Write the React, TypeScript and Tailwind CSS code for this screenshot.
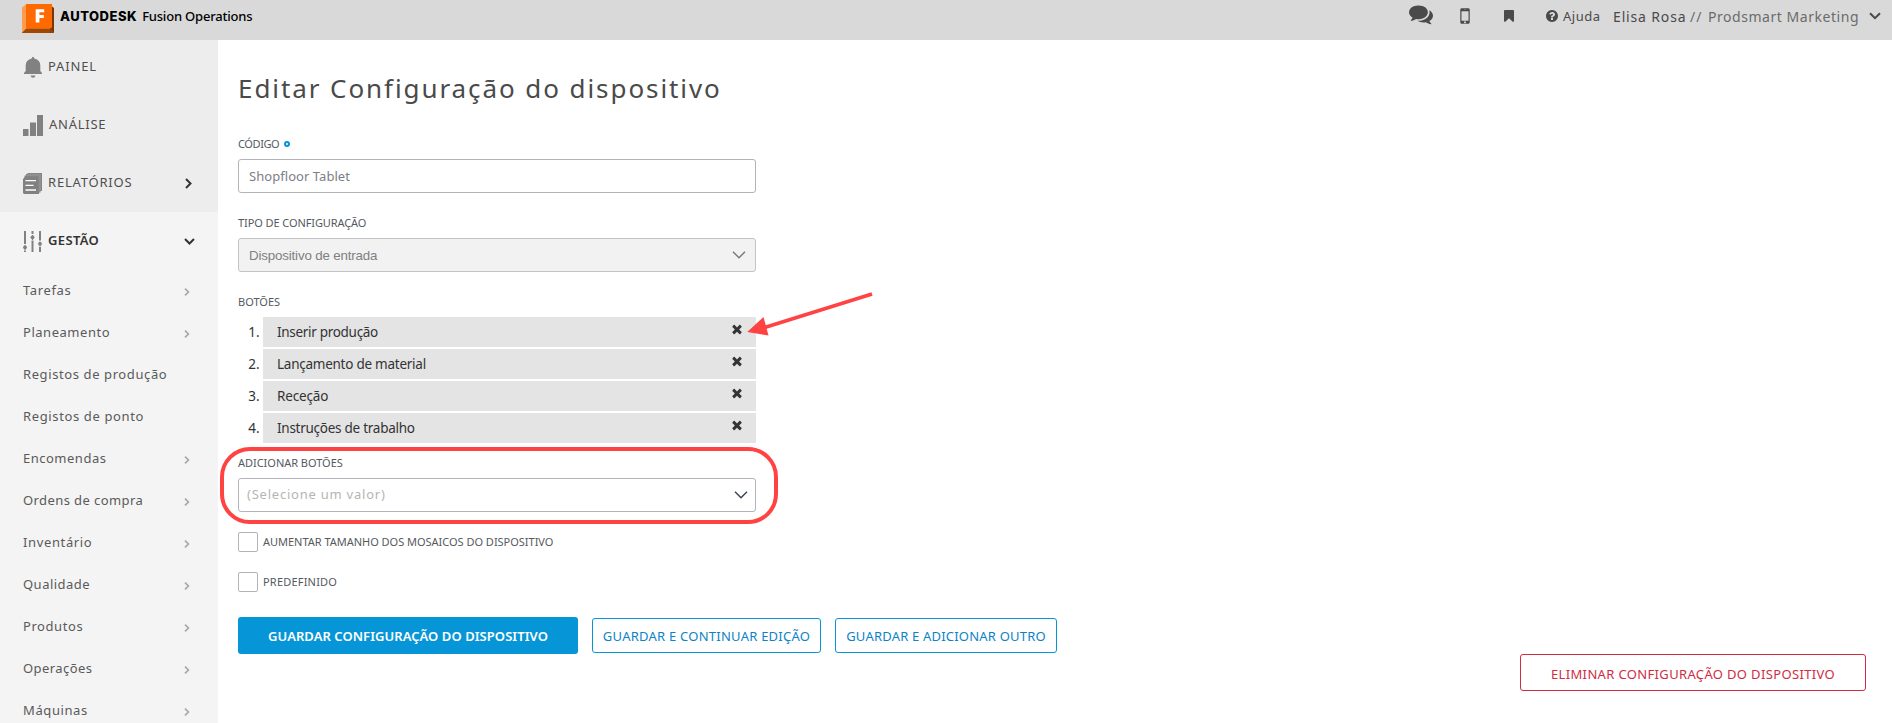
import React from "react";

function Glyph({ d, className, viewBox = "0 0 1792 1792" }: { d: string; className: string; viewBox?: string }) {
  return (
    <svg viewBox={viewBox} className={className} fill="currentColor" aria-hidden="true">
      <path d={d} />
    </svg>
  );
}

const COMMENTS =
  "M1408 768q0 139-94 257t-256.5 186.5-353.5 68.5q-86 0-176-16-124 88-278 128-36 9-86 16h-3q-11 0-20.5-8t-11.5-21q-1-3-1-6.5t.5-6.5 2-6l2.5-5t3.5-5.5 4-5 4.5-5 4-4.5q5-6 23-25t26-29.5 22.5-29 25-38.5 20.5-44q-124-72-195-177t-71-224q0-139 94-257t256.5-186.5 353.5-68.5 353.5 68.5 256.5 186.5 94 257zm384 256q0 120-71 224.5t-195 176.5q10 24 20.5 44t25 38.5 22.5 29 26 29.5 23 25q1 1 4 4.5t4.5 5 4 5 3.5 5.5l2.5 5t2 6 .5 6.5-1 6.5q-3 14-13 22t-22 7q-50-7-86-16-154-40-278-128-90 16-176 16-271 0-472-132 58 4 88 4 161 0 309-45t264-129q125-92 192-212t67-254q0-77-23-152 129 71 204 178t75 230z";
const MOBILE =
  "M976 1408q0-33-23.5-56.5t-56.5-23.5-56.5 23.5-23.5 56.5 23.5 56.5 56.5 23.5 56.5-23.5 23.5-56.5zm208-160v-704q0-13-9.5-22.5t-22.5-9.5h-512q-13 0-22.5 9.5t-9.5 22.5v704q0 13 9.5 22.5t22.5 9.5h512q13 0 22.5-9.5t9.5-22.5zm-192-848q0-16-16-16h-160q-16 0-16 16t16 16h160q16 0 16-16zm288-16v1024q0 52-38 90t-90 38h-512q-52 0-90-38t-38-90v-1024q0-52 38-90t90-38h512q52 0 90 38t38 90z";
const BOOKMARK =
  "M1420 128q23 0 44 9 33 13 52.5 41t19.5 62v1289q0 34-19.5 62t-52.5 41q-19 8-44 8-48 0-83-32l-441-424-441 424q-36 33-83 33-23 0-44-9-33-13-52.5-41t-19.5-62v-1289q0-34 19.5-62t52.5-41q21-9 44-9h1048z";
const HELP =
  "M1024 1376v-192q0-14-9-23t-23-9h-192q-14 0-23 9t-9 23v192q0 14 9 23t23 9h192q14 0 23-9t9-23zm256-672q0-88-55.5-163t-138.5-116-170-41q-243 0-371 213-15 24 8 42l132 100q7 6 19 6 16 0 25-12 53-68 86-92 34-24 86-24 48 0 85.5 26t37.5 59q0 38-20 61t-68 45q-63 28-115.5 86.5t-52.5 125.5v36q0 14 9 23t23 9h192q14 0 23-9t9-23q0-19 21.5-49.5t54.5-49.5q32-18 49-28.5t46-35 44.5-48 28-60.5 12.5-81zm384 192q0 209-103 385.5t-279.5 279.5-385.5 103-385.5-103-279.5-279.5-103-385.5 103-385.5 279.5-279.5 385.5-103 385.5 103 279.5 279.5 103 385.5z";
const TIMES =
  "M1490 1322q0 40-28 68l-136 136q-28 28-68 28t-68-28l-294-294-294 294q-28 28-68 28t-68-28l-136-136q-28-28-28-68t28-68l294-294-294-294q-28-28-28-68t28-68l136-136q28-28 68-28t68 28l294 294 294-294q28-28 68-28t68 28l136 136q28 28 28 68t-28 68l-294 294 294 294q28 28 28 68z";

function Chevron({ className, d, box, width }: { className: string; d: string; box: string; width: number }) {
  return (
    <svg viewBox={box} className={className} fill="none" stroke="currentColor" strokeWidth={width} aria-hidden="true">
      <path d={d} />
    </svg>
  );
}

function Logo() {
  return (
    <svg viewBox="0 0 32 30" className="h-[30px] w-8" aria-hidden="true">
      <path d="M0 3.5 4.5 0v25L0 29z" fill="#ff9c4d" />
      <path d="M0 29 4.5 24.5H28L32 29z" fill="#8f3f04" />
      <path d="M0 29 4.5 24.5H28V29z" fill="#a04704" />
      <path d="M30 2.5 32 4v25l-4-4V2z" fill="#7d3503" />
      <path d="M4 0h26v22.500q0 2-2 2H4z" fill="#ff6a00" />
      <path d="M13.700 5.200h8.500v3h-4.800v2.800h4.400v3h-4.400v4.500h-3.700z" fill="#fff" />
    </svg>
  );
}

function BellIcon() {
  return (
    <svg viewBox="0 0 18 21" className="h-[21px] w-[18px]" fill="#818181" aria-hidden="true">
      <path d="M9 0q1.200 0 1.300 1.400Q16.300 2.600 16.300 8.500v5.500L18 16v1H0v-1l1.700-2V8.500Q1.700 2.600 7.700 1.400 7.800 0 9 0zM6.500 18.500h5Q11 20.700 9 20.700T6.500 18.500z" />
    </svg>
  );
}

function BarsIcon() {
  return (
    <svg viewBox="0 0 20 21" className="h-[21px] w-5" fill="#818181" aria-hidden="true">
      <path d="M0 14h5.500v7H0zM7 7.500h6V21H7zM14 0h6v21h-6z" />
    </svg>
  );
}

function ReportsIcon() {
  return (
    <svg viewBox="0 0 19 21" className="h-[21px] w-[19px]" aria-hidden="true">
      <path d="M4.500 0H19v18h-1.500v1.500H16V21H1.500V2.500H3V1h1.500z" fill="#818181" />
      <path d="M3 2.700H16.300V19.500M4.500 1.300H17.700V18" fill="none" stroke="#a9a9a9" strokeWidth=".5" />
      <path d="M2 4H15v17H1L0 20V6z" fill="#818181" />
      <path d="M2.500 7.700h10.500M2.500 12.300h8M2.500 17h10.500" stroke="#fff" strokeWidth="1.300" />
    </svg>
  );
}

function SlidersIcon() {
  return (
    <svg viewBox="0 0 19 21" className="h-[21px] w-[19px]" aria-hidden="true">
      <path d="M2 0v13M2 19.500V21M9.500 0v3M9.500 9.500V21M17 0v9.500M17 16v5" stroke="#818181" strokeWidth="2" />
      <path d="M2 14v5M9.500 4v5M17 10.500v5" stroke="#818181" strokeWidth="1.200" />
      <circle cx="2" cy="16.300" r="1.900" fill="#818181" />
      <circle cx="9.500" cy="6.300" r="1.900" fill="#818181" />
      <circle cx="17" cy="12.800" r="1.900" fill="#818181" />
    </svg>
  );
}

const subItems = [
  { label: "Tarefas", cls: "tracking-[0.63px]", more: true },
  { label: "Planeamento", cls: "tracking-[0.53px]", more: true },
  { label: "Registos de produção", cls: "tracking-[0.6px]", more: false },
  { label: "Registos de ponto", cls: "tracking-[0.63px]", more: false },
  { label: "Encomendas", cls: "tracking-[0.5px]", more: true },
  { label: "Ordens de compra", cls: "tracking-[0.41px]", more: true },
  { label: "Inventário", cls: "tracking-[0.63px]", more: true },
  { label: "Qualidade", cls: "tracking-[0.47px]", more: true },
  { label: "Produtos", cls: "tracking-[0.57px]", more: true },
  { label: "Operações", cls: "tracking-[0.42px]", more: true },
  { label: "Máquinas", cls: "tracking-[0.6px]", more: true },
];

const rows = [
  { label: "Inserir produção", cls: "tracking-[-0.3px]" },
  { label: "Lançamento de material", cls: "tracking-[-0.25px]" },
  { label: "Receção", cls: "tracking-[-0.15px]" },
  { label: "Instruções de trabalho", cls: "tracking-[-0.26px]" },
];

function Header() {
  return (
    <header className="flex h-10 shrink-0 items-start justify-between bg-[#d9d9d9] pl-[22px] pr-[11px] text-[#4a4a4a]">
      <div className="flex items-start whitespace-nowrap text-black">
        <div className="pt-1">
          <Logo />
        </div>
        <span className="ml-[6px] pt-[6px] font-[Inter] text-[13px] leading-5 font-extrabold tracking-[0.5px]">AUTODESK</span>
        <span className="ml-[5px] pt-[6px] text-[13px] leading-5 font-medium tracking-[-0.2px]">Fusion Operations</span>
      </div>
      <div className="flex h-8 items-center whitespace-nowrap">
        <Glyph d={COMMENTS} className="mb-[5px] h-6 w-6" />
        <Glyph d={MOBILE} className="ml-[21px] h-[22px] w-[22px]" />
        <Glyph d={BOOKMARK} className="ml-[26px] h-[14px] w-[14px]" />
        <Glyph d={HELP} className="ml-[29px] h-[14px] w-[14px]" />
        <span className="mt-px ml-1 w-[50px] text-[13px] tracking-[0.5px]">Ajuda</span>
        <span className="w-[77px] text-[14px] tracking-[0.85px]">Elisa Rosa</span>
        <span className="w-[18px] text-[14px] tracking-[1px] text-[#6b6b6b]">//</span>
        <span className="w-[161px] text-[14px] tracking-[0.54px] text-[#6b6b6b]">Prodsmart Marketing</span>
        <Chevron className="h-2 w-3" box="0 0 12 8" d="M1 1.200 6 6.200l5-5" width={2} />
      </div>
    </header>
  );
}

function Sidebar() {
  return (
    <nav className="w-[218px] shrink-0 overflow-hidden bg-[#f4f4f4] text-[13px] whitespace-nowrap text-[#4f4f4f]">
      <div className="flex h-[172px] flex-col gap-[6px] bg-[#ededed] pl-[23px]">
        <div className="flex h-[52px] items-center pl-px">
          <div className="w-6 pt-[3px]"><BellIcon /></div>
          <span className="pt-[2px] tracking-[0.83px]">PAINEL</span>
        </div>
        <div className="flex h-[52px] items-center">
          <div className="w-[26px] pt-[3px]"><BarsIcon /></div>
          <span className="pt-[2px] tracking-[0.74px]">ANÁLISE</span>
        </div>
        <div className="flex h-[52px] items-center">
          <div className="w-[25px] pt-[3px]"><ReportsIcon /></div>
          <span className="flex-1 pt-[2px] tracking-[0.8px]">RELATÓRIOS</span>
          <Chevron className="mt-[3px] mr-[26px] h-[11px] w-[7px] text-[#333]" box="0 0 7 11" d="M1 1l4.500 4.500L1 10" width={2} />
        </div>
      </div>
      <div className="flex h-[56px] items-center pl-[23px] text-[#333]">
        <div className="w-[25px] pt-[3px]"><SlidersIcon /></div>
        <span className="flex-1 pt-[2px] font-semibold tracking-[0.35px]">GESTÃO</span>
        <Chevron className="mt-[3px] mr-[23px] h-[7px] w-[11px]" box="0 0 11 7" d="M1 1l4.500 4.500L10 1" width={2} />
      </div>
      <ul className="mt-px pl-[23px]">
        {subItems.map((it) => (
          <li key={it.label} className="flex h-[42px] items-center justify-between pr-[28px] text-[#5a5a5a]">
            <span className={`pt-[2px] ${it.cls}`}>{it.label}</span>
            {it.more && <Chevron className="mt-[4px] h-2 w-[6px] text-[#a8a8a8]" box="0 0 6 8" d="M1 .7 4.400 4 1 7.300" width={1.7} />}
          </li>
        ))}
      </ul>
    </nav>
  );
}

function Main() {
  return (
    <main className="relative flex flex-1 flex-col pl-5 whitespace-nowrap text-[#555a61]">
      <h1 className="mt-[30px] text-[26px] leading-9 tracking-[1.92px] text-[#4a4a4a]">Editar Configuração do dispositivo</h1>
      <label className="mt-[30px] flex h-4 items-center text-[11px] leading-4 tracking-[-0.4px]">
        CÓDIGO
        <span className="ml-[5px] h-[6px] w-[6px] rounded-full border-2 border-[#0696d7]" />
      </label>
      <div className="mt-[7px] flex h-[34px] w-[518px] items-center rounded-[3px] border border-[#b3b3bb] pt-[2px] pl-[10px] text-[13px] tracking-[0.05px] text-[#7c8086]">Shopfloor Tablet</div>
      <label className="mt-[22px] text-[11px] leading-4 tracking-[-0.09px]">TIPO DE CONFIGURAÇÃO</label>
      <div className="mt-[7px] flex h-[34px] w-[518px] items-center justify-between rounded-[3px] border border-[#c4c4c6] bg-[#f2f2f2] pr-[9px] pl-[10px] font-['Liberation_Sans'] text-[13.33px] tracking-[-0.16px] text-[#808080]">
        <span className="pt-px">Dispositivo de entrada</span>
        <Chevron className="h-2 w-[14px] text-[#77777f]" box="0 0 14 8" d="M1 .8l6 6 6-6" width={1.4} />
      </div>
      <label className="mt-[22px] text-[11px] leading-4">BOTÕES</label>
      <ol className="mt-[7px] flex w-[518px] flex-col gap-[2px] text-[13.5px] text-[#333]">
        {rows.map((r, i) => (
          <li key={r.label} className="flex h-[30px] items-center">
            <span className="w-[25px] pt-px pr-[3.5px] text-right">{i + 1}.</span>
            <div className="flex h-full flex-1 items-center justify-between bg-[#e4e4e4] pr-[12.5px] pl-[14px]">
              <span className={`pt-px ${r.cls}`}>{r.label}</span>
              <Glyph d={TIMES} className="mb-[6px] h-[14px] w-[14px]" />
            </div>
          </li>
        ))}
      </ol>
      <label className="mt-3 text-[11px] leading-4 tracking-[-0.03px]">ADICIONAR BOTÕES</label>
      <div className="mt-[7px] flex h-[34px] w-[518px] items-center justify-between rounded-[3px] border border-[#b3b3bb] pr-[7px] pl-[8px] text-[13px] tracking-[0.77px] text-[#b5b5b5]">
        (Selecione um valor)
        <Chevron className="h-2 w-[14px] text-[#3c4452]" box="0 0 14 8" d="M1 .8l6 6 6-6" width={1.5} />
      </div>
      <label className="mt-5 flex h-5 items-center gap-[5px] text-[11px]">
        <span className="h-5 w-5 rounded-[2px] border border-[#b3b3bb]" />
        <span className="tracking-[-0.02px]">AUMENTAR TAMANHO DOS MOSAICOS DO DISPOSITIVO</span>
      </label>
      <label className="mt-5 flex h-5 items-center gap-[5px] text-[11px]">
        <span className="h-5 w-5 rounded-[2px] border border-[#b3b3bb]" />
        <span className="tracking-[0.2px]">PREDEFINIDO</span>
      </label>
      <div className="mt-[25px] flex h-[37px] items-center text-[13px] text-[#0c83c6]">
        <button className="h-[37px] w-[340px] rounded-[3px] bg-[#0696d7] pt-[2px] font-semibold tracking-[0.06px] text-white">GUARDAR CONFIGURAÇÃO DO DISPOSITIVO</button>
        <button className="ml-[14px] h-[35px] w-[229px] rounded-[3px] border border-[#0696d7] pt-[2px] tracking-[0.24px]">GUARDAR E CONTINUAR EDIÇÃO</button>
        <button className="ml-[14px] h-[35px] w-[222px] rounded-[3px] border border-[#0696d7] pt-[2px] tracking-[0.2px]">GUARDAR E ADICIONAR OUTRO</button>
      </div>
      <button className="mr-[26px] h-[37px] w-[346px] shrink-0 self-end rounded-[3px] border border-[#d02c44] pt-[4px] text-[13px] tracking-[0.35px] text-[#d02c44]">ELIMINAR CONFIGURAÇÃO DO DISPOSITIVO</button>

      <svg viewBox="0 0 130 50" className="absolute top-[250px] left-[527px] h-[50px] w-[130px]" aria-hidden="true">
        <path d="M18 38 127 4" stroke="#ff4343" strokeWidth="3.800" />
        <path d="M2.200 42 18.500 27l5 18.500z" fill="#ff4343" />
      </svg>
      <div className="absolute top-[407px] left-[2px] h-[77px] w-[558px] rounded-[30px] border-4 border-[#ff4343]" />
    </main>
  );
}

export default function App() {
  return (
    <div className="flex h-[723px] w-full flex-col overflow-hidden bg-white font-['Noto_Sans',sans-serif]">
      <Header />
      <div className="flex min-h-0 flex-1">
        <Sidebar />
        <Main />
      </div>
    </div>
  );
}
